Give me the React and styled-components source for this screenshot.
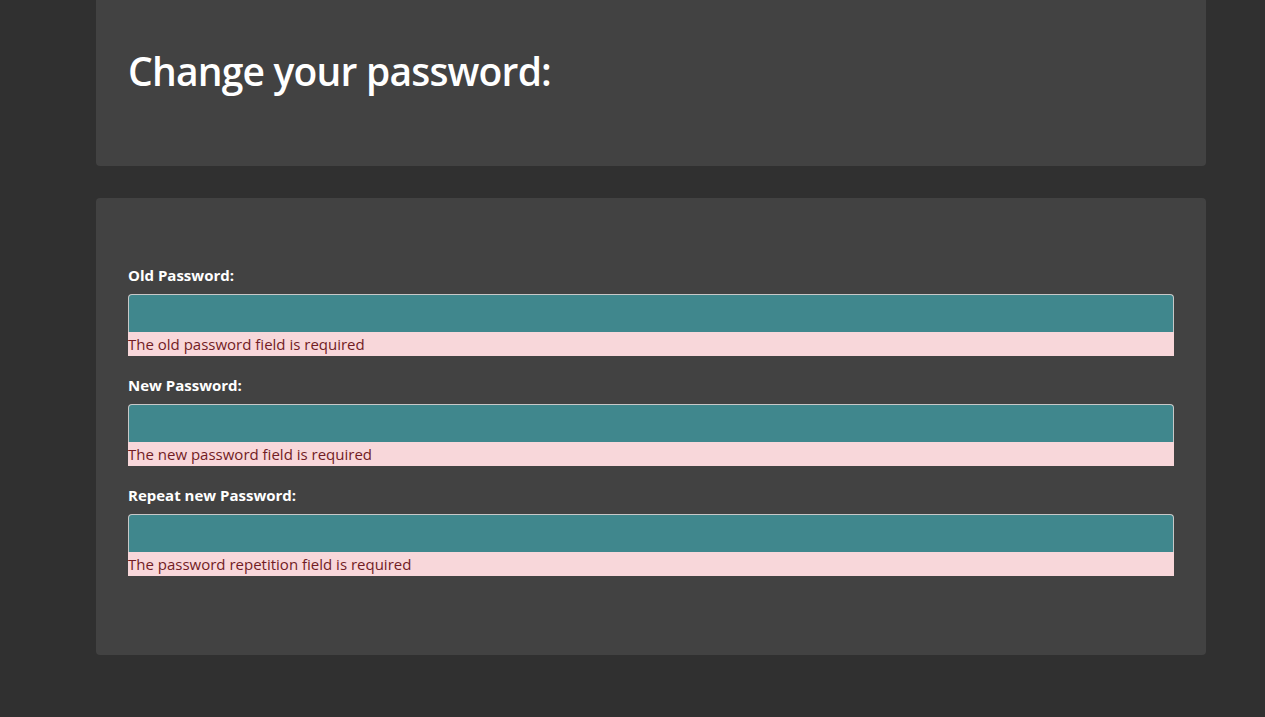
import styled, { createGlobalStyle } from 'styled-components';

const GlobalStyle = createGlobalStyle`
  html, body {
    margin: 0;
    padding: 0;
    background: #303030;
  }
  body {
    font-family: 'Open Sans', 'Noto Sans', sans-serif;
    color: #fff;
  }
`;

const fields = [
  { id: 'old', label: 'Old Password:', error: 'The old password field is required' },
  { id: 'new', label: 'New Password:', error: 'The new password field is required' },
  { id: 'repeat', label: 'Repeat new Password:', error: 'The password repetition field is required' },
];

export default function App() {
  return (
    <>
      <GlobalStyle />
      <Page>
        <HeaderCard>
          <Title>Change your password:</Title>
        </HeaderCard>
        <FormCard>
          {fields.map((f) => (
            <Group key={f.id}>
              <Label htmlFor={f.id}>{f.label}</Label>
              <Input id={f.id} type="password" />
              <Error>{f.error}</Error>
            </Group>
          ))}
        </FormCard>
      </Page>
    </>
  );
}

const Page = styled.div`
  width: 1110px;
  margin-left: 96px;
  padding-bottom: 62px;
  display: flex;
  flex-direction: column;
  gap: 32px;
`;

const HeaderCard = styled.div`
  background: #424242;
  border-radius: 0 0 4px 4px;
  height: 166px;
  box-sizing: border-box;
  padding: 47px 32px 0;
`;

const Title = styled.h1`
  margin: 0;
  font-size: 39px;
  font-weight: 600;
  line-height: 48px;
  letter-spacing: -0.8px;
  color: #fff;
`;

const FormCard = styled.div`
  background: #424242;
  border-radius: 4px;
  padding: 66px 32px 61px;
`;

const Group = styled.div`
  display: flex;
  flex-direction: column;
  margin-bottom: 18px;
`;

const Label = styled.label`
  font-size: 15px;
  font-weight: 700;
  line-height: 22px;
  margin-bottom: 8px;
  color: #fff;
`;

const Input = styled.input`
  box-sizing: border-box;
  height: 38px;
  width: 100%;
  margin: 0;
  padding: 6px 12px;
  background: #40878d;
  border: 1px solid #c8c8c8;
  border-bottom: none;
  border-radius: 4px 4px 0 0;
  color: #fff;
  font-size: 16px;
  outline: none;
`;

const Error = styled.div`
  background: #f8d7da;
  color: #721c24;
  font-size: 15px;
  line-height: 25px;
  height: 24px;
`;
